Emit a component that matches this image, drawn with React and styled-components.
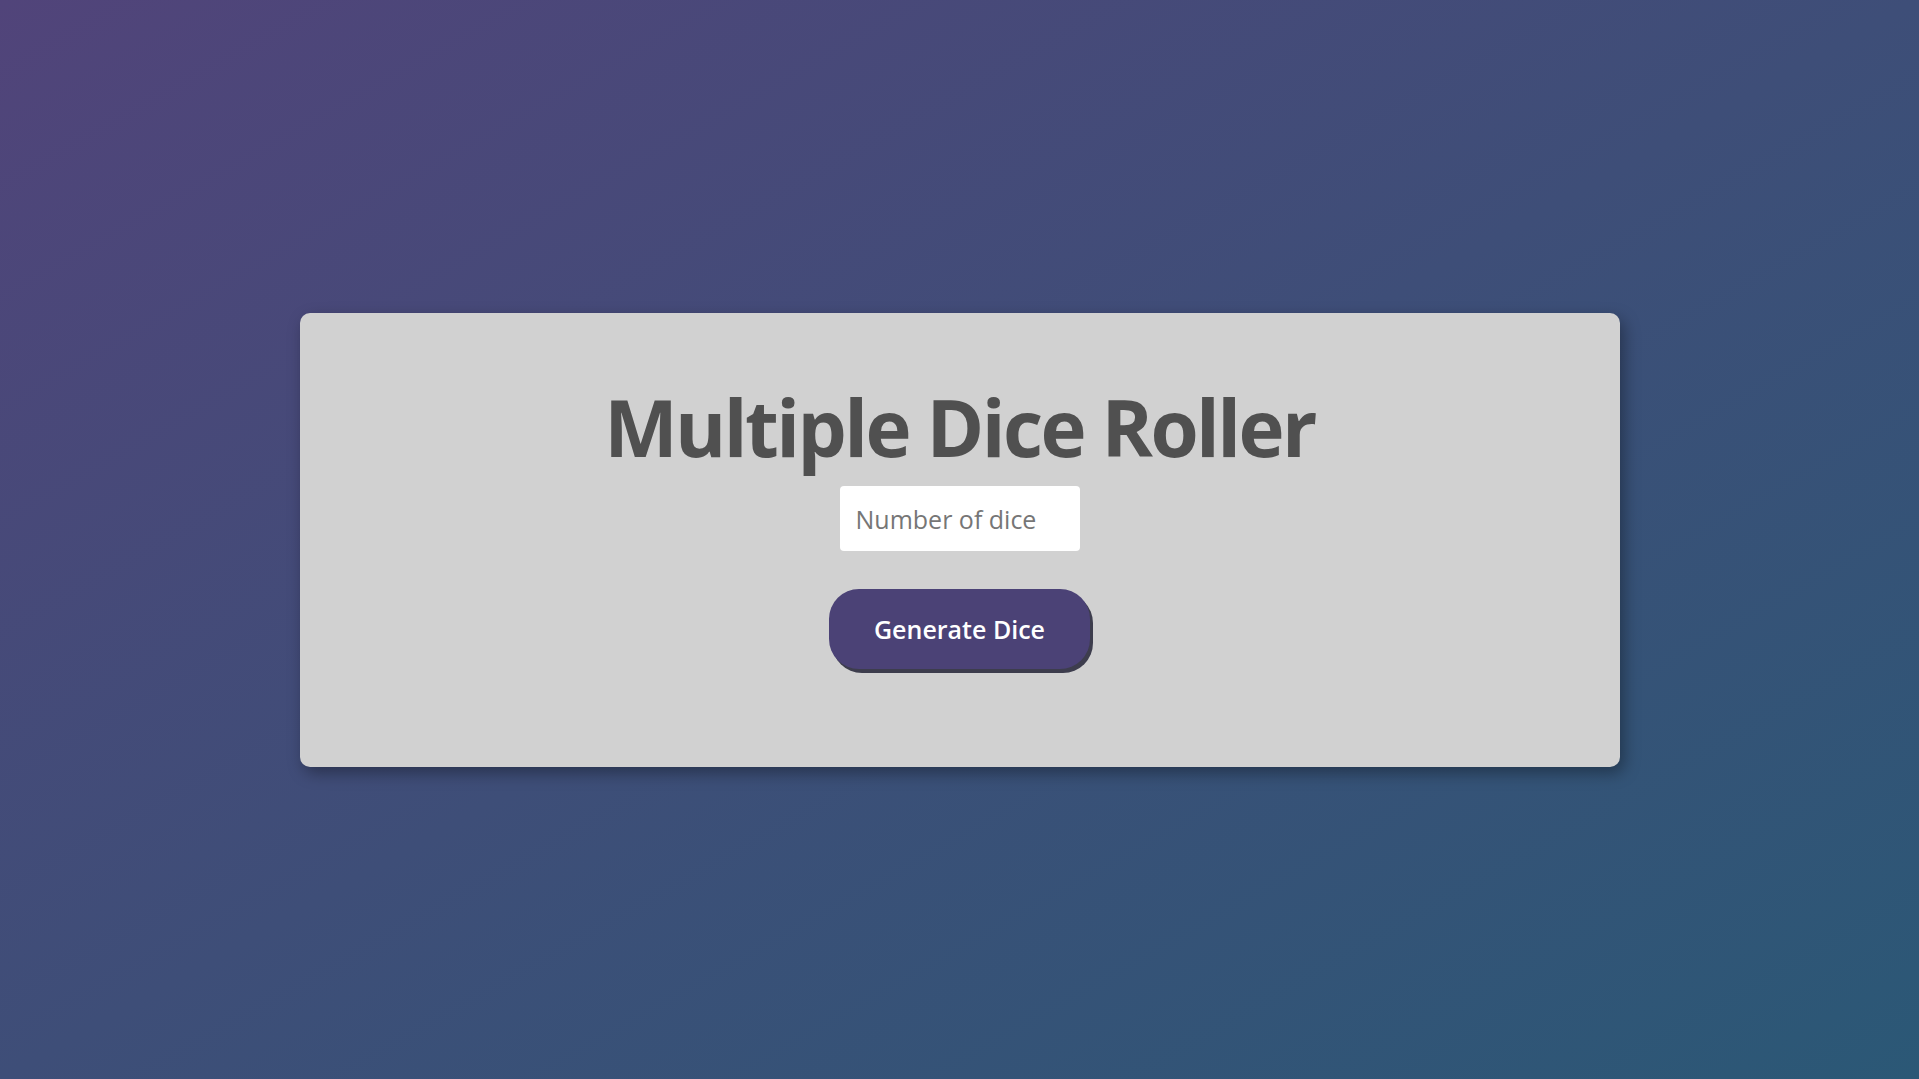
import React, { useState } from "react";
import styled, { createGlobalStyle } from "styled-components";

const GlobalStyle = createGlobalStyle`
  * {
    box-sizing: border-box;
  }
  body {
    margin: 0;
    font-family: "Open Sans", "Liberation Sans", sans-serif;
  }
`;

export default function App() {
  const [count, setCount] = useState("");

  return (
    <Page>
      <GlobalStyle />
      <Card>
        <Title>Multiple Dice Roller</Title>
        <DiceInput
          type="number"
          placeholder="Number of dice"
          value={count}
          onChange={(e) => setCount(e.target.value)}
        />
        <GenerateButton>Generate Dice</GenerateButton>
      </Card>
    </Page>
  );
}

const Page = styled.div`
  min-height: 100vh;
  display: flex;
  align-items: center;
  justify-content: center;
  background: linear-gradient(to bottom right, #51447a, #2b5876);
`;

const Card = styled.div`
  width: 1320px;
  height: 454px;
  padding-top: 68px;
  display: flex;
  flex-direction: column;
  align-items: center;
  background-color: #d1d1d1;
  border-radius: 10px;
  box-shadow: 4px 6px 16px rgba(0, 0, 0, 0.35);
`;

const Title = styled.h1`
  margin: 0 0 12px;
  font-family: "Open Sans", sans-serif;
  font-size: 78px;
  font-weight: 700;
  line-height: 1.2;
  letter-spacing: -2.6px;
  color: #505050;
`;

const DiceInput = styled.input`
  width: 240px;
  height: 65px;
  padding: 0 16px;
  border: none;
  border-radius: 4px;
  background: #ffffff;
  font-family: "Open Sans", sans-serif;
  font-size: 25px;
  color: #505050;
  outline: none;
  -moz-appearance: textfield;

  &::placeholder {
    color: #767676;
  }
  &::-webkit-outer-spin-button,
  &::-webkit-inner-spin-button {
    -webkit-appearance: none;
    margin: 0;
  }
`;

const GenerateButton = styled.button`
  margin-top: 38px;
  width: 261px;
  height: 80px;
  border: none;
  border-radius: 30px;
  background-color: #4b4276;
  color: #ffffff;
  font-family: "Open Sans", sans-serif;
  font-size: 25px;
  font-weight: 600;
  box-shadow: 3px 4px 0 #3d3d4d;
  cursor: pointer;
`;
